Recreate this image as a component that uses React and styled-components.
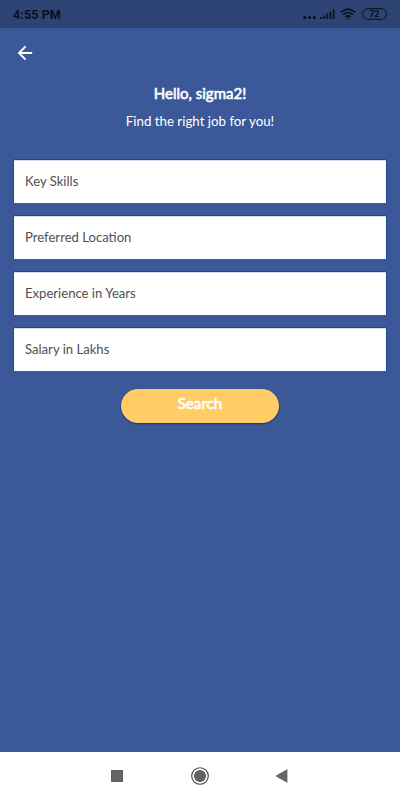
import React from "react";
import styled, { createGlobalStyle } from "styled-components";

const GlobalStyle = createGlobalStyle`
  * { box-sizing: border-box; }
  body { margin: 0; background: #3b5998; }
`;

const Screen = styled.div`
  height: 100vh;
  display: flex;
  flex-direction: column;
  background: #3b5998;
  font-family: Lato, "Liberation Sans", sans-serif;
  overflow: hidden;
`;

const StatusBar = styled.header`
  height: 28px;
  flex: none;
  display: flex;
  align-items: center;
  justify-content: space-between;
  padding: 0 12px 0 13px;
  background: #2d4373;
`;

const Clock = styled.time`
  font: 700 12.5px/28px Roboto, sans-serif;
  color: #0b101c;
  letter-spacing: 0.1px;
  padding-top: 1px;
`;

const StatusIcons = styled.svg`
  display: block;
  width: 86px;
  height: 28px;
`;

const Toolbar = styled.nav`
  height: 50px;
  flex: none;
  padding: 17px 0 0 17px;
`;

const BackButton = styled.button`
  display: block;
  width: 16px;
  height: 16px;
  padding: 0;
  border: 0;
  background: none;
  svg { display: block; }
`;

const Greeting = styled.div`
  height: 82px;
  flex: none;
  display: flex;
  flex-direction: column;
  align-items: center;
  color: #fff;
  white-space: nowrap;
`;

const Title = styled.h1`
  margin: 5px 0 0;
  font-size: 15px;
  line-height: 20px;
  font-weight: 400;
  -webkit-text-stroke: 0.6px #fff;
`;

const Subtitle = styled.p`
  margin: 8px 0 0;
  font-size: 13.3px;
  line-height: 20px;
`;

const Form = styled.form`
  display: flex;
  flex-direction: column;
  gap: 13px;
  padding: 0 14px;
`;

const Field = styled.div`
  height: 43px;
  padding: 0 11px;
  background: #fff;
  border-top: 1px solid #d3daea;
  box-shadow: 0 -1px 0 #174795, -1px 0 0 #174795, 1px 0 0 #174795;
  color: #505050;
  font-size: 13.1px;
  line-height: 40px;
`;

const SearchButton = styled.button`
  width: 158px;
  height: 34px;
  margin: 5px auto 0;
  padding: 0 0 5px;
  border: 0;
  border-radius: 17px;
  background: #ffcc66;
  box-shadow: 0 0 1px #174795, 0 1px 2px rgba(8, 30, 78, 0.6);
  color: #fff;
  font: 400 15.2px/29px Lato, sans-serif;
  -webkit-text-stroke: 0.6px #fff;
`;

const NavigationBar = styled.footer`
  height: 48px;
  flex: none;
  margin-top: auto;
  background: #fff;
  svg { display: block; }
`;

const fields = [
  "Key Skills",
  "Preferred Location",
  "Experience in Years",
  "Salary in Lakhs",
];

function SystemIcons() {
  return (
    <StatusIcons viewBox="302 0 86 28" fill="#0b101c">
      <circle cx="304.7" cy="17.5" r="1.6" />
      <circle cx="309.5" cy="17.5" r="1.6" />
      <circle cx="314.3" cy="17.5" r="1.6" />
      <path d="M320 17h1.7v2H320zM323.2 15.4h1.7V19h-1.7zM326.4 13.4h1.7V19h-1.7zM329.6 11.4h1.7V19h-1.7zM332.8 9.2h1.7V19h-1.7z" />
      <g fill="none" stroke="#0b101c" strokeWidth="1.6">
        <path d="M340.9 12.4q7.2-6.6 14.4 0M343.2 14.7q4.9-4.4 9.8 0M345.6 17q2.5-2.2 5 0" />
      </g>
      <path d="M346.7 18q1.5-1.2 3 0l-1.5 1.6z" />
      <rect x="362.6" y="8.7" width="24" height="10.6" rx="5" fill="none" stroke="#0b101c" strokeWidth="1" />
      <text x="374.5" y="17.1" textAnchor="middle" fontFamily="Roboto, sans-serif" fontSize="8.5" fontWeight="700">72</text>
    </StatusIcons>
  );
}

export default function App() {
  return (
    <Screen>
      <GlobalStyle />
      <StatusBar>
        <Clock>4:55 PM</Clock>
        <SystemIcons />
      </StatusBar>
      <Toolbar>
        <BackButton aria-label="Back">
          <svg width="16" height="16" viewBox="0 0 16 16" fill="none" stroke="#fff" strokeWidth="1.9">
            <path d="M15.2 8H2.4M8.6 1.4L2 8l6.6 6.6" />
          </svg>
        </BackButton>
      </Toolbar>
      <Greeting>
        <Title>Hello, sigma2!</Title>
        <Subtitle>Find the right job for you!</Subtitle>
      </Greeting>
      <Form>
        {fields.map((label) => (
          <Field key={label}>{label}</Field>
        ))}
        <SearchButton type="button">Search</SearchButton>
      </Form>
      <NavigationBar>
        <svg width="400" height="48" viewBox="0 0 400 48">
          <rect x="111.4" y="18.4" width="11.2" height="11.2" fill="#666" stroke="#4d4d4d" strokeWidth="0.8" />
          <circle cx="200" cy="24" r="8.3" fill="#fff" stroke="#3d3d3d" strokeWidth="1.1" />
          <circle cx="200" cy="24" r="6.1" fill="#636363" />
          <path d="M276 24l11-6.3v12.6z" fill="#666" stroke="#555" strokeWidth="0.7" />
        </svg>
      </NavigationBar>
    </Screen>
  );
}
